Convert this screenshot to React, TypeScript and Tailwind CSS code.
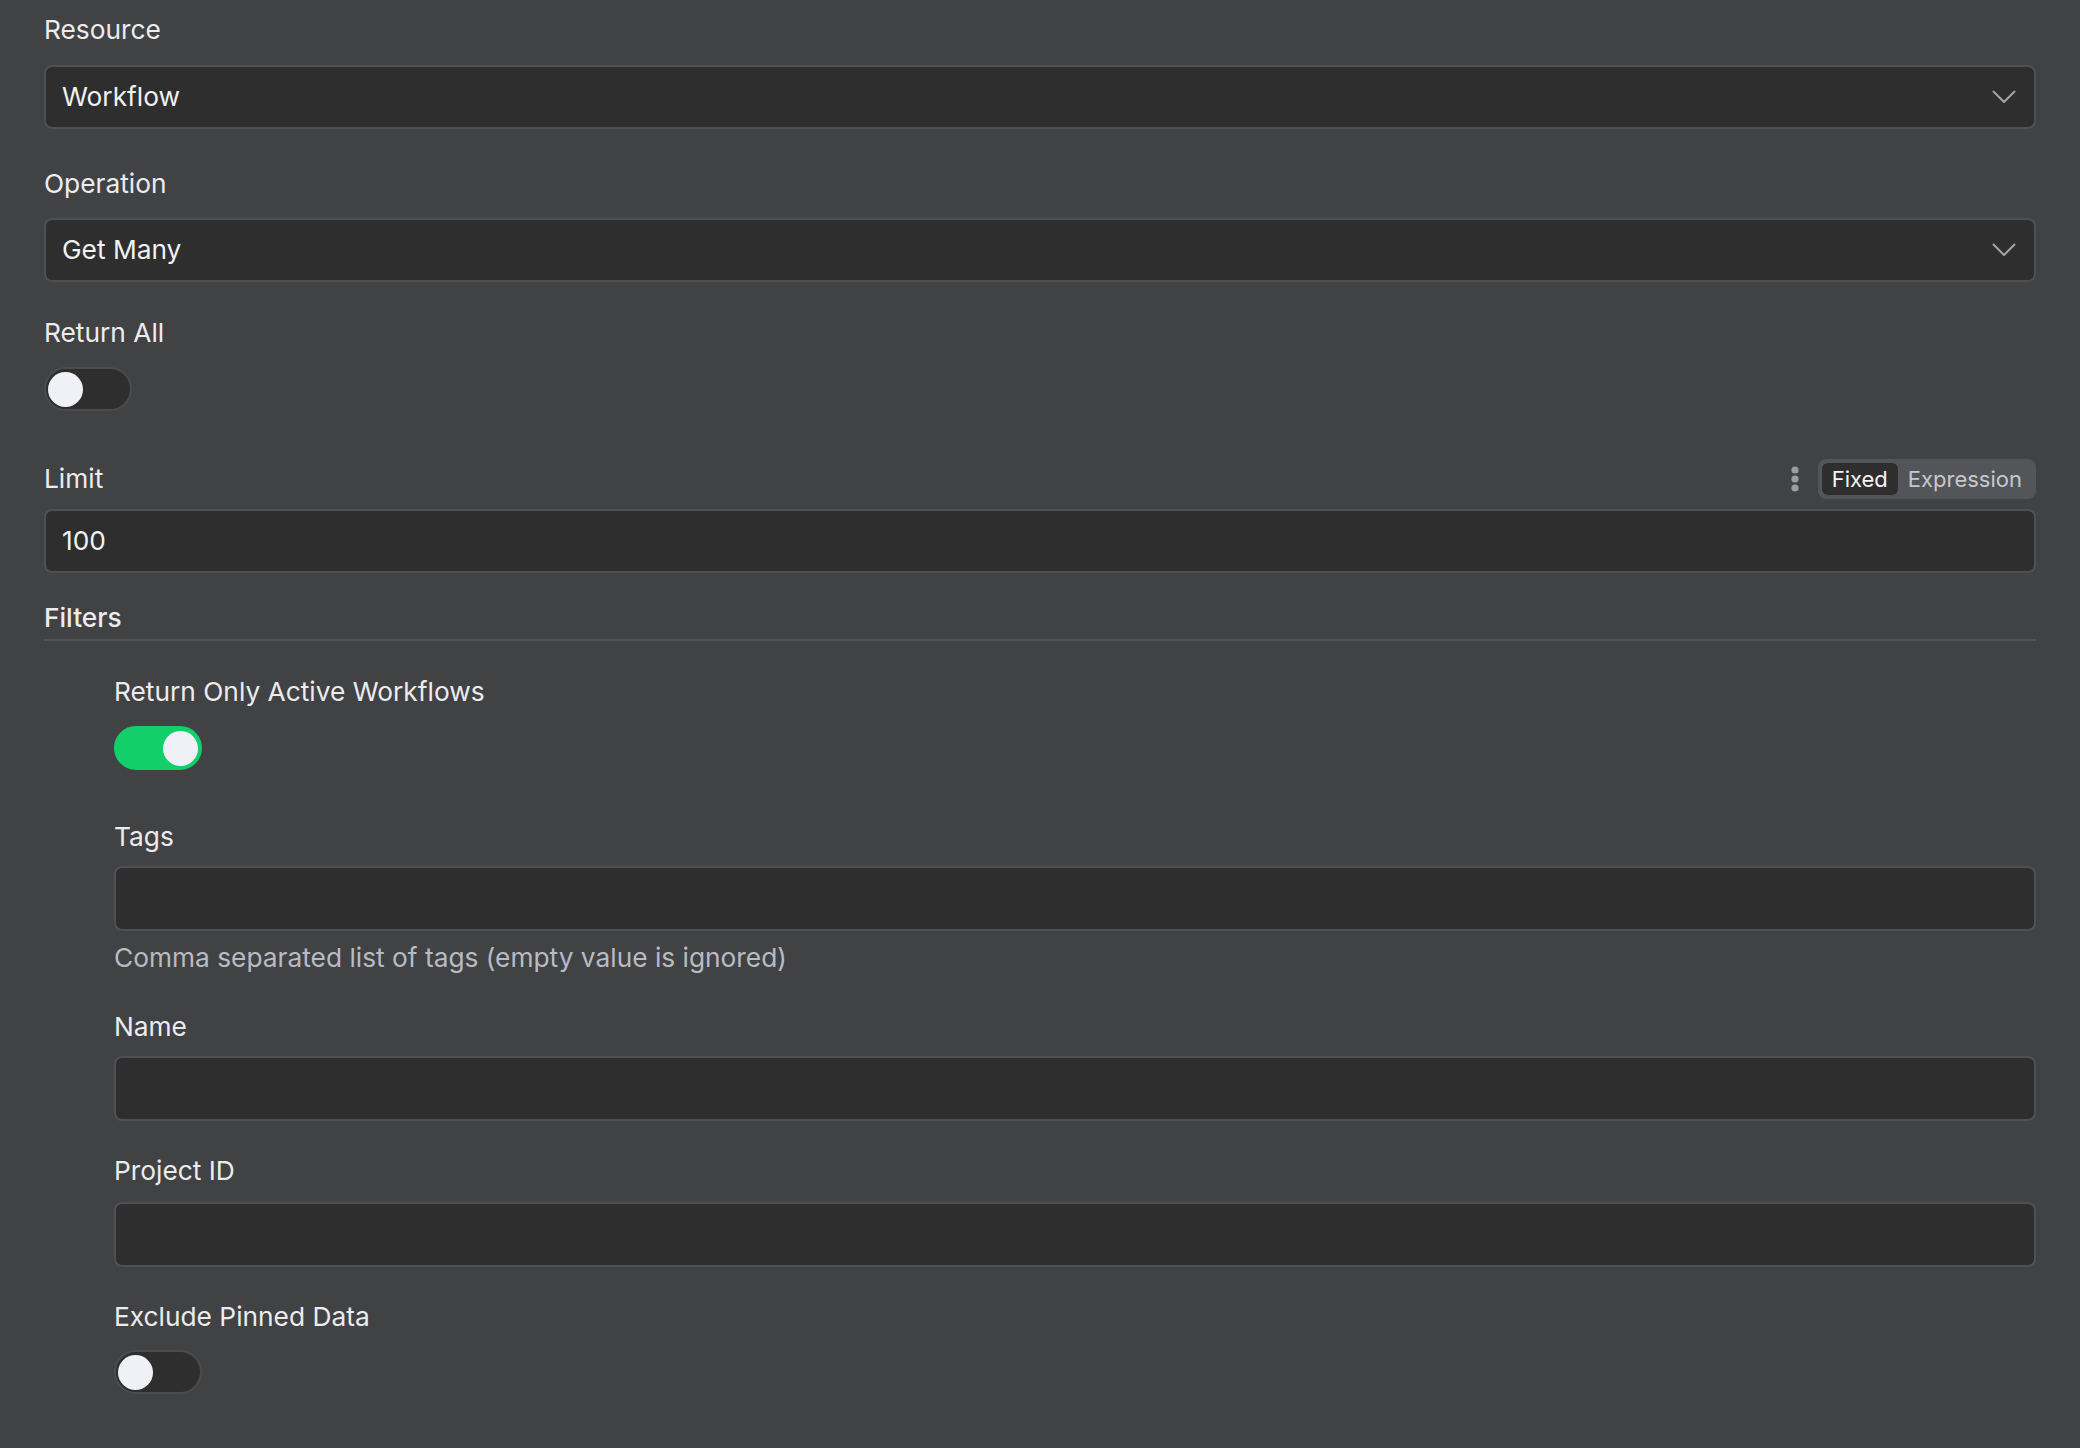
import React, { useState } from "react";
import clsx from "clsx";

const Label = ({ children, className }: { children: React.ReactNode; className?: string }) => (
  <div className={clsx("text-[26.3px] leading-[32px] text-[#ececef]", className)}>{children}</div>
);

const Chevron = () => (
  <svg width="24" height="14" viewBox="0 0 24 14" fill="none" className="shrink-0">
    <path d="M1.5 1.5 L12 12 L22.5 1.5" stroke="#a3a4ab" strokeWidth="2" strokeLinecap="round" strokeLinejoin="round" />
  </svg>
);

const Select = ({ value }: { value: string }) => (
  <div className="flex h-[64px] items-center justify-between rounded-[8px] border-2 border-[#4f5053] bg-[#2e2e2e] pl-[16px] pr-[18px]">
    <span className="text-[26.3px] text-[#f1f1f3]">{value}</span>
    <Chevron />
  </div>
);

const TextInput = ({ value, className }: { value?: string; className?: string }) => (
  <div
    className={clsx(
      "flex items-center rounded-[8px] border-2 border-[#4f5053] bg-[#2e2e2e] pl-[16px]",
      className ?? "h-[64px]"
    )}
  >
    <span className="text-[26.3px] text-[#f1f1f3]">{value}</span>
  </div>
);

const Toggle = ({ on, onClick }: { on: boolean; onClick: () => void }) => (
  <button
    onClick={onClick}
    className={clsx(
      "flex h-[44px] w-[88px] items-center rounded-full border-2 px-[2px]",
      on ? "justify-end border-[#13cf69] bg-[#13cf69]" : "justify-start border-[#4b4c4f] bg-[#2e2e2e]"
    )}
  >
    <span className="block h-[35px] w-[35px] rounded-full bg-[#eff1f6]" />
  </button>
);

const Dots = () => (
  <svg width="8" height="26" viewBox="0 0 8 26" className="shrink-0">
    <circle cx="4" cy="4" r="3.6" fill="#9b9ca2" />
    <circle cx="4" cy="13" r="3.6" fill="#9b9ca2" />
    <circle cx="4" cy="22" r="3.6" fill="#9b9ca2" />
  </svg>
);

export default function App() {
  const [returnAll, setReturnAll] = useState(false);
  const [activeOnly, setActiveOnly] = useState(true);
  const [excludePinned, setExcludePinned] = useState(false);
  const [mode, setMode] = useState<"fixed" | "expression">("fixed");

  return (
    <div className="min-h-screen bg-[#414244] px-[44px] pt-[14px] font-['Inter',sans-serif]">
      <Label>Resource</Label>
      <div className="mt-[19px]">
        <Select value="Workflow" />
      </div>

      <Label className="mt-[39px]">Operation</Label>
      <div className="mt-[18px]">
        <Select value="Get Many" />
      </div>

      <Label className="mt-[35px]">Return All</Label>
      <div className="mt-[18px]">
        <Toggle on={returnAll} onClick={() => setReturnAll(!returnAll)} />
      </div>

      <div className="mt-[48px] flex h-[40px] items-center justify-between">
        <Label>Limit</Label>
        <div className="flex items-center gap-[19px]">
          <Dots />
          <div className="flex h-[40px] items-center rounded-[8px] bg-[#545558] p-[4px]">
            <button
              onClick={() => setMode("fixed")}
              className={clsx(
                "h-[32px] rounded-[6px] px-[10px] text-[22px] leading-[32px]",
                mode === "fixed" ? "bg-[#2e2e2e] text-[#f4f4f6]" : "text-[#c6c8cf]"
              )}
            >
              Fixed
            </button>
            <button
              onClick={() => setMode("expression")}
              className={clsx(
                "h-[32px] rounded-[6px] px-[10px] text-[22px] leading-[32px]",
                mode === "expression" ? "bg-[#2e2e2e] text-[#f4f4f6]" : "text-[#c6c8cf]"
              )}
            >
              Expression
            </button>
          </div>
        </div>
      </div>
      <div className="mt-[10px]">
        <TextInput value="100" />
      </div>

      <Label className="mt-[29px] font-medium">Filters</Label>
      <div className="mt-[5px] h-[2px] bg-[#545558]" />

      <div className="pl-[70px]">
        <Label className="mt-[35px]">Return Only Active Workflows</Label>
        <div className="mt-[18px]">
          <Toggle on={activeOnly} onClick={() => setActiveOnly(!activeOnly)} />
        </div>

        <Label className="mt-[51px]">Tags</Label>
        <div className="mt-[13px]">
          <TextInput className="h-[65px]" />
        </div>
        <div className="mt-[11px] text-[26.3px] leading-[32px] text-[#b9bbc3]">
          Comma separated list of tags (empty value is ignored)
        </div>

        <Label className="mt-[37px]">Name</Label>
        <div className="mt-[13px]">
          <TextInput className="h-[65px]" />
        </div>

        <Label className="mt-[34px]">Project ID</Label>
        <div className="mt-[15px]">
          <TextInput className="h-[65px]" />
        </div>

        <Label className="mt-[34px]">Exclude Pinned Data</Label>
        <div className="mt-[17px]">
          <Toggle on={excludePinned} onClick={() => setExcludePinned(!excludePinned)} />
        </div>
      </div>
    </div>
  );
}
